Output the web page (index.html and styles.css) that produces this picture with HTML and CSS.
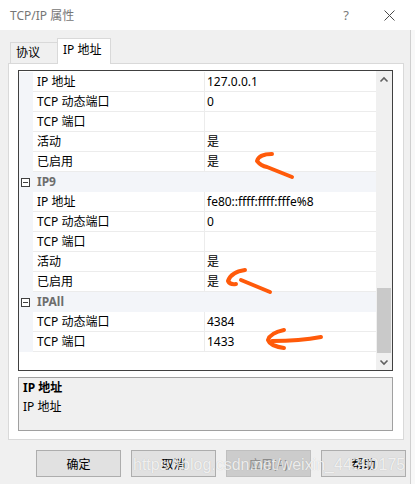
FILE: index.html
```html
<!DOCTYPE html>
<html lang="zh-CN">
  <head>
    <title>TCP/IP 属性</title>
    <meta charset="utf-8" />
    <link rel="stylesheet" href="styles.css">
  </head>

  <body>
    <div class="window">
      <header class="titlebar">
        <span class="title">TCP/IP 属性</span>
        <span class="help">?</span>
        <svg class="close" width="11" height="11" viewBox="0 0 11 11">
          <path d="M0.5 0.5 L10.5 10.5 M10.5 0.5 L0.5 10.5" stroke="#4a4a4a" stroke-width="1" fill="none" />
        </svg>
      </header>

      <div class="frame">
        <main class="dialog">
          <nav class="tabs">
            <span class="tab">协议</span>
            <span class="tab tab--active">IP 地址</span>
          </nav>

          <section class="panel">
            <div class="grid">
              <div class="rows">
                <div class="row"><span class="gutter"></span><span class="name">IP 地址</span><span class="value">127.0.0.1</span></div>
                <div class="row"><span class="gutter"></span><span class="name">TCP 动态端口</span><span class="value">0</span></div>
                <div class="row"><span class="gutter"></span><span class="name">TCP 端口</span><span class="value"></span></div>
                <div class="row"><span class="gutter"></span><span class="name">活动</span><span class="value">是</span></div>
                <div class="row"><span class="gutter"></span><span class="name">已启用</span><span class="value">是</span></div>
                <div class="row row--category"><span class="gutter"><i class="toggle"></i></span><span class="category">IP9</span></div>
                <div class="row"><span class="gutter"></span><span class="name">IP 地址</span><span class="value">fe80::ffff:ffff:fffe%8</span></div>
                <div class="row"><span class="gutter"></span><span class="name">TCP 动态端口</span><span class="value">0</span></div>
                <div class="row"><span class="gutter"></span><span class="name">TCP 端口</span><span class="value"></span></div>
                <div class="row"><span class="gutter"></span><span class="name">活动</span><span class="value">是</span></div>
                <div class="row"><span class="gutter"></span><span class="name">已启用</span><span class="value">是</span></div>
                <div class="row row--category"><span class="gutter"><i class="toggle"></i></span><span class="category">IPAll</span></div>
                <div class="row"><span class="gutter"></span><span class="name">TCP 动态端口</span><span class="value">4384</span></div>
                <div class="row"><span class="gutter"></span><span class="name">TCP 端口</span><span class="value">1433</span></div>
              </div>

              <div class="scrollbar">
                <svg class="arrow" width="16" height="17" viewBox="0 0 16 17">
                  <polyline points="4.5,10.5 8,7 11.5,10.5" fill="none" stroke="#606060" stroke-width="1.6" />
                </svg>
                <div class="track"><div class="thumb"></div></div>
                <svg class="arrow" width="16" height="17" viewBox="0 0 16 17">
                  <polyline points="4.5,7.5 8,11 11.5,7.5" fill="none" stroke="#606060" stroke-width="1.6" />
                </svg>
              </div>
            </div>

            <div class="desc">
              <div class="desc__title">IP 地址</div>
              <div>IP 地址</div>
            </div>
          </section>

          <footer class="buttons">
            <button class="btn">确定</button>
            <button class="btn">取消</button>
            <button class="btn" disabled>应用(A)</button>
            <button class="btn">帮助</button>
          </footer>
        </main>
        <div class="edge"></div>
      </div>

      <svg class="marks" width="415" height="484" viewBox="0 0 415 484">
        <g fill="none" stroke="#ff5a0a" stroke-width="4" stroke-linecap="round" stroke-linejoin="round">
          <path d="M272 154 Q259 154 257 161 Q261 166 267 167 L292 177" />
          <path d="M245 270 Q231 272 228 281 Q230 285 236 284" />
          <path d="M241 280 L270 292" />
          <path d="M284 330 Q270 333 268 340 Q270 346 284 348" />
          <path d="M272 341 Q300 341 321 337" />
        </g>
      </svg>
      <div class="watermark">https://blog.csdn.net/weixin_44390175</div>
    </div>
  </body>
</html>
```

FILE: styles.css
```css
* {
  box-sizing: border-box;
}

html,
body {
  margin: 0;
  padding: 0;
}

body {
  width: 415px;
  height: 484px;
  overflow: hidden;

  font: 12px "Noto Sans", "Noto Sans CJK SC", sans-serif;
  color: #000;
  background-color: #f0f0f0;
}

.window {
  position: relative;
  display: flex;
  flex-direction: column;
  height: 484px;
}

/* title bar */
.titlebar {
  display: flex;
  align-items: center;
  height: 30px;
  padding-left: 10px;

  background-color: #fff;
  color: #767676;
}

.title {
  flex: 1;
}

.help {
  font-size: 13px;
  color: #7a7a7a;
}

.close {
  margin: 0 20px 0 35px;
}

.frame {
  flex: 1;
  display: flex;
}

.dialog {
  display: flex;
  flex-direction: column;
  width: 411px;
  padding-left: 8px;

  border-right: 1px solid #cfcfcf;
}

.edge {
  flex: 1;
  background-color: #f8f8f8;
}

/* tabs */
.tabs {
  display: flex;
  align-items: flex-end;
  height: 33px;
  padding-left: 2px;
}

.tab {
  width: 49px;
  height: 21px;
  margin-right: -2px;
  padding-left: 5px;

  line-height: 20px;
  border: 1px solid #d9d9d9;
  border-bottom: 0;
  background-color: #f0f0f0;
}

.tab--active {
  position: relative;
  width: 54px;
  height: 26px;
  margin-bottom: -1px;

  line-height: 22px;
  background-color: #fff;
}

.panel {
  display: flex;
  flex-direction: column;
  gap: 6px;
  width: 396px;
  padding: 6px 10px 8px 9px;

  border: 1px solid #d9d9d9;
  background-color: #fff;
}

/* property grid */
.grid {
  display: flex;
  width: 375px;
  height: 301px;

  border: 1px solid #404040;
}

.rows {
  flex: 1;
  padding-top: 1px;
}

.row {
  display: grid;
  grid-template-columns: 14px 172px 1fr;
  height: 20px;
}

.gutter {
  display: flex;
  align-items: center;
  background-color: #f3f5f9;
}

.name,
.value {
  line-height: 19px;
  border-bottom: 1px solid #ececec;
  white-space: nowrap;
}

.name {
  padding-left: 4px;
  border-right: 1px solid #ececec;
}

.value {
  padding-left: 2px;
}

.row--category {
  background-color: #f3f5f9;
}

.category {
  grid-column: 2 / 4;
  padding-left: 4px;

  line-height: 20px;
  font-weight: bold;
  color: #6d6d6d;
}

.toggle {
  position: relative;
  display: block;
  width: 9px;
  height: 9px;
  margin-left: 2px;

  border: 1px solid #404040;
  background-color: #fff;
}

.toggle::after {
  content: "";
  position: absolute;
  left: 1px;
  top: 3px;
  width: 5px;
  height: 1px;
  background-color: #404040;
}

.scrollbar {
  display: flex;
  flex-direction: column;
  width: 16px;
  background-color: #f0f0f0;
}

.arrow {
  display: block;
  flex: none;
}

.track {
  flex: 1;
  display: flex;
  flex-direction: column;
  justify-content: flex-end;
}

.thumb {
  height: 65px;
  margin: 0 1px;
  background-color: #c9c9c9;
}

.desc {
  height: 54px;
  padding: 0 4px;

  line-height: 19px;
  border: 1px solid #a0a0a0;
  background-color: #f0f0f0;
}

.desc__title {
  font-weight: bold;
}

/* buttons */
.buttons {
  display: flex;
  gap: 10px;
  margin-top: 10px;
  padding-left: 28px;
}

.btn {
  flex: none;
  width: 85px;
  height: 27px;
  padding: 0;

  font: inherit;
  color: #000;
  border: 1px solid #adadad;
  background-color: #e1e1e1;
}

.btn:disabled {
  color: #8a8a8a;
  border-color: #bfbfbf;
  background-color: #cccccc;
}

/* annotations over the screenshot */
.marks {
  position: absolute;
  top: 0;
  left: 0;
  pointer-events: none;
}

.watermark {
  position: absolute;
  left: 133px;
  top: 456px;

  font: 16px/18px "Liberation Sans", sans-serif;
  color: rgba(255, 255, 255, 0.8);
  text-shadow: 0 0 1px rgba(0, 0, 0, 0.2);
  white-space: nowrap;
  pointer-events: none;
}
```
